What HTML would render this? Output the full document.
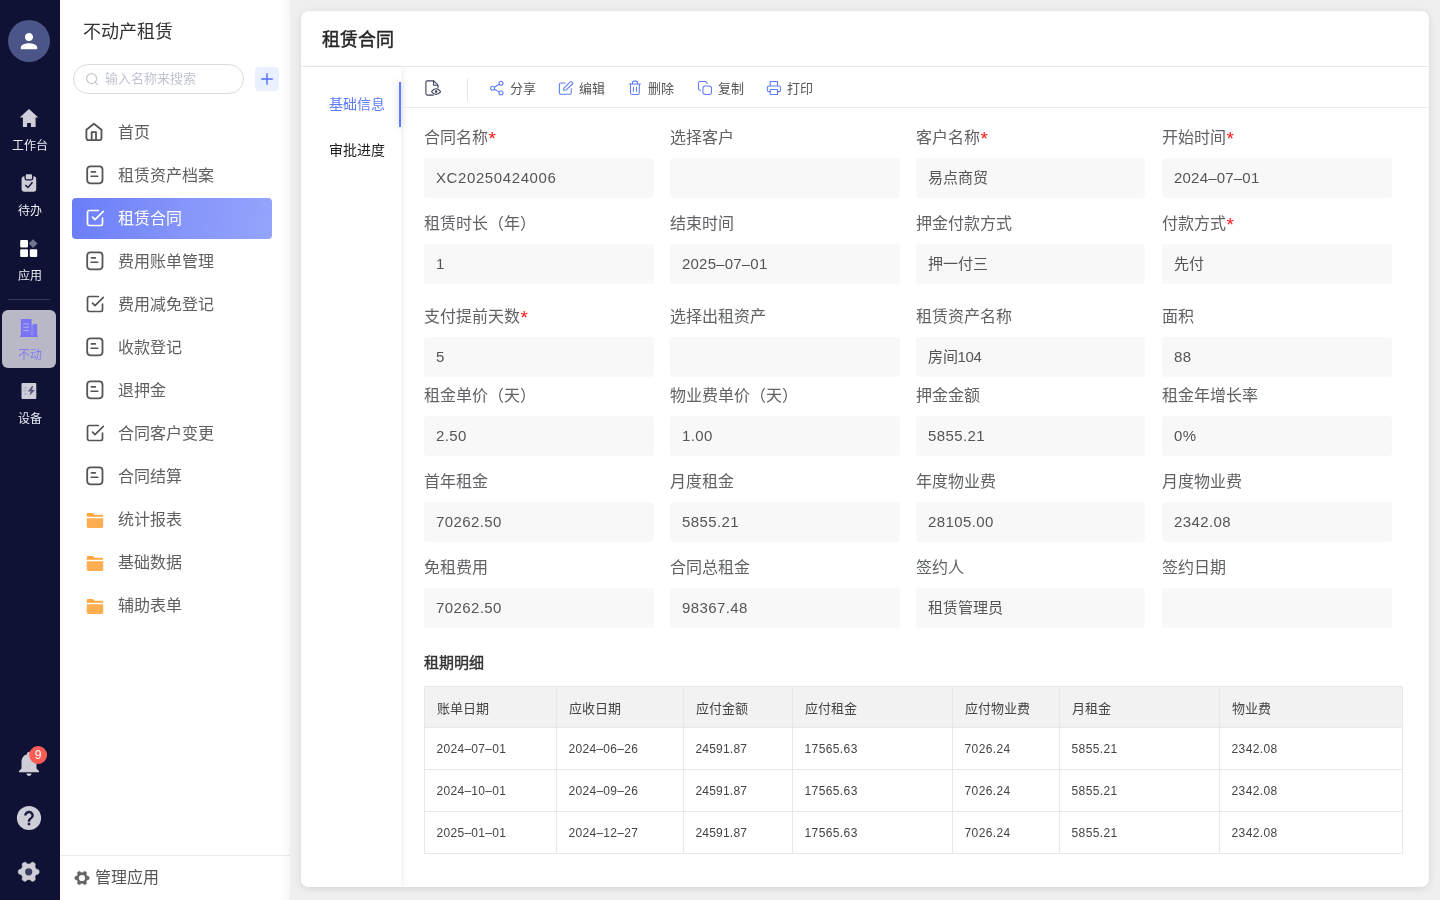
<!DOCTYPE html>
<html lang="zh-CN">
<head>
<meta charset="utf-8">
<title>租赁合同</title>
<style>
*{box-sizing:border-box;margin:0;padding:0}
html,body{width:1440px;height:900px;overflow:hidden}
body{font-family:"Liberation Sans",sans-serif;background:#efefef;position:relative;color:#333;-webkit-font-smoothing:antialiased}
#wrap{position:absolute;left:0;top:0;width:1440px;height:900px;will-change:transform}
/* rail */
#rail{position:absolute;left:0;top:0;width:60px;height:900px;background:#0f1235}
#avatar{position:absolute;left:8px;top:20px;width:42px;height:42px;border-radius:50%;background:#4b5588}
.rl{position:absolute;left:0;width:60px;text-align:center;font-size:12px;line-height:14px;color:#ececf2}
.ri{position:absolute}
#ractive{position:absolute;left:2px;top:310px;width:54px;height:58px;border-radius:6px;background:#b8b8c6}
#rdiv{position:absolute;left:8px;top:299px;width:42px;height:1px;background:#34385a}
/* sidebar */
#side{position:absolute;left:60px;top:0;width:230px;height:900px;background:#fff}
#side:after{content:"";position:absolute;right:0;top:0;width:9px;height:100%;background:linear-gradient(to right,rgba(0,0,0,0),rgba(0,0,0,0.03))}
#stitle{position:absolute;left:23px;top:20px;font-size:18px;line-height:24px;color:#333}
#search{position:absolute;left:13px;top:64px;width:171px;height:30px;border:1px solid #d9dbe1;border-radius:15px;background:#fff}
#search span{position:absolute;left:31px;top:0;line-height:28px;font-size:13px;color:#c0c5d0}
#plus{position:absolute;left:195px;top:67px;width:24px;height:24px;border-radius:4px;background:#e9f0ff}
.mi{position:absolute;left:12px;width:200px;height:41px;border-radius:4px}
.mi span{position:absolute;left:46px;top:0;line-height:41px;font-size:16px;color:#606060}
.mi svg{position:absolute;left:12px;top:10px}
.mi.act{background:linear-gradient(100deg,#6a7df8 0%,#8595fa 55%,#95a4fb 100%)}
.mi.act span{color:#fff}
#sfoot{position:absolute;left:0;top:855px;width:230px;height:45px;border-top:1px solid #ebebeb}
#sfoot span{position:absolute;left:35px;top:0;line-height:43px;font-size:16px;color:#555}
/* card */
#card{position:absolute;left:301px;top:11px;width:1128px;height:876px;background:#fff;border-radius:8px;box-shadow:0 2px 8px rgba(0,0,0,0.11);overflow:hidden}
#ctitle{position:absolute;left:20.5px;top:16px;font-size:18px;line-height:26px;font-weight:normal;-webkit-text-stroke:.45px #262626;color:#262626}
#chead{position:absolute;left:0;top:0;width:100%;height:56px;border-bottom:1px solid #e8e8e8}
#tabs{position:absolute;left:0;top:56px;width:100px;height:820px;background:#fff;box-shadow:2px 0 6px rgba(0,0,0,0.06)}
.tab{position:absolute;left:0;width:100px;text-align:center;padding-right:0;font-size:14px;line-height:46px;height:46px;color:#222}
.tab.on{color:#5c7cfa}
#tabbar{position:absolute;left:98px;top:15px;width:2px;height:45px;background:#5c7cfa;box-shadow:0 0 7px rgba(92,124,250,.45)}
#tool{position:absolute;left:100px;top:56px;width:1028px;height:41px;border-bottom:1px solid #ebebeb}
.tb{position:absolute;top:1px;line-height:41px;font-size:13px;color:#555}
.tbi{position:absolute}
/* form */
.lb{position:absolute;font-size:16px;line-height:22px;color:#606266;white-space:nowrap}
.lb i{font-style:normal;color:#ff1515;font-size:19px;line-height:0;vertical-align:-1.7px;margin-left:.5px}
.ip{position:absolute;width:230px;height:40px;border-radius:4px;background:#f8f8f8;padding-left:12px;line-height:40px;font-size:15px;color:#555;white-space:nowrap;letter-spacing:.4px}
#ttitle{position:absolute;left:424px;top:652px;font-size:15px;font-weight:normal;-webkit-text-stroke:.4px #333;line-height:22px;color:#333}
table{position:absolute;left:424px;top:686px;border-collapse:separate;border-spacing:0;table-layout:fixed;width:979px;border-top:1px solid #e8e8e8;border-left:1px solid #e8e8e8}
td,th{border:0;border-right:1px solid #e8e8e8;border-bottom:1px solid #e8e8e8;height:42px;padding:0 0 0 11.5px;text-align:left;font-size:12px;font-weight:normal;color:#444;letter-spacing:.4px;white-space:nowrap}
th{background:#f2f2f2;font-size:13px;color:#444;letter-spacing:0;height:41px}
</style>
</head>
<body>
<div id="wrap">
<div id="rail">
  <div id="avatar"></div>
  <div id="ractive"></div>
<svg class="ri" style="left:0;top:0" width="60" height="900" viewBox="0 0 60 900">
<!-- avatar person -->
<g transform="translate(16.7 28.8) scale(1.025)"><path d="M12 12c2.21 0 4-1.79 4-4s-1.79-4-4-4-4 1.79-4 4 1.79 4 4 4zm0 2c-2.67 0-8 1.34-8 4v2h16v-2c0-2.66-5.330-4-8-4z" fill="#fff"/></g>
<!-- home -->
<path d="M29 108.9 L38.3 117.6 H35.6 V127 H30.9 V123.1 H27.1 V127 H22.9 V117.6 H19.7 Z" fill="#cdced8"/>
<!-- clipboard -->
<rect x="21.6" y="176.3" width="14.6" height="15.4" rx="2.6" fill="#cdced8"/>
<rect x="25.1" y="173.6" width="7.6" height="6.3" rx="1.6" fill="#cdced8" stroke="#0f1235" stroke-width="1.3"/>
<path d="M25.3 185.1 L28 187.5 L32.5 182.2" fill="none" stroke="#15183c" stroke-width="1.5"/>
<!-- apps -->
<rect x="20.2" y="240" width="7.8" height="7.5" rx="1" fill="#fff"/>
<rect x="20.2" y="249.2" width="7.8" height="7.7" rx="1" fill="#fff"/>
<rect x="29.8" y="249.2" width="7.4" height="7.7" rx="1" fill="#fff"/>
<path d="M33.1 239.2 L37.5 243.6 L33.1 248 L28.7 243.6 Z" fill="#70748f"/>
<!-- building (active) -->
<g fill="#7a73f6">
<rect x="20.9" y="319" width="10.7" height="17"/>
<rect x="33.1" y="324" width="4.1" height="12"/>
<rect x="20" y="335.5" width="18" height="1.5"/>
<rect x="31.6" y="325" width="1.5" height="11" opacity=".75"/>
</g>
<g fill="#a9a6ee"><rect x="23.3" y="323.3" width="5.7" height="1.2"/><rect x="23.3" y="326.6" width="5.7" height="1.2"/><rect x="23.3" y="330" width="5.7" height="1.2"/></g>
<!-- device -->
<rect x="21.5" y="383" width="14.8" height="16.1" rx="1" fill="#cdced8"/>
<path d="M32 386 L27.7 391.6 H30.6 L29.4 395.8 L35 389.9 H32.1 L33.2 386 Z" fill="#5b5f7f"/>
<g fill="#a6a9bd"><rect x="23.9" y="387.4" width="3.2" height="1.1"/><rect x="23.2" y="390.3" width="3" height="1.1"/><rect x="23.9" y="393.3" width="3.2" height="1.1"/></g>
<!-- bell -->
<g transform="translate(14 748.5) scale(1.25)"><path d="M12 22c1.1 0 2-.9 2-2h-4c0 1.1.89 2 2 2zm6-6v-5c0-3.07-1.64-5.64-4.5-6.320V4c0-.83-.67-1.5-1.5-1.5s-1.5.67-1.500 1.500v.68C7.630 5.360 6 7.920 6 11v5l-2 2v1h16v-1l-2-2z" fill="#cdced8"/></g>
<circle cx="38.1" cy="755" r="9" fill="#fd5c55"/>
<text x="38.2" y="759.2" font-family="Liberation Sans, sans-serif" font-size="12" fill="#fff" text-anchor="middle">9</text>
<!-- help -->
<circle cx="29" cy="818" r="12.1" fill="#cdced8"/>
<g transform="translate(29 818) scale(1.21) translate(-12 -12)"><path d="M11 18h2v-2h-2v2zm1-12c-2.21 0-4 1.79-4 4h2c0-1.1.9-2 2-2s2 .9 2 2c0 2-3 1.75-3 5h2c0-2.250 3-2.5 3-5 0-2.21-1.79-4-4-4z" fill="#1a1d40"/></g>
<!-- gear -->
<g transform="translate(28.7 871.8)"><path d="M10.40 0.00 L10.39 0.45 L10.36 0.91 L10.29 1.35 L10.01 1.77 L9.50 2.11 L8.84 2.37 L8.17 2.58 L7.64 2.78 L7.32 3.03 L7.16 3.34 L7.01 3.65 L6.84 3.95 L6.66 4.24 L6.47 4.53 L6.29 4.82 L6.23 5.23 L6.31 5.79 L6.47 6.47 L6.58 7.18 L6.54 7.79 L6.32 8.23 L5.97 8.52 L5.59 8.77 L5.20 9.01 L4.80 9.22 L4.40 9.43 L3.97 9.59 L3.48 9.56 L2.93 9.28 L2.37 8.84 L1.85 8.36 L1.41 8.01 L1.03 7.86 L0.69 7.87 L0.34 7.89 L0.00 7.90 L-0.34 7.89 L-0.69 7.87 L-1.03 7.86 L-1.41 8.01 L-1.85 8.36 L-2.37 8.84 L-2.93 9.28 L-3.48 9.56 L-3.97 9.59 L-4.40 9.43 L-4.80 9.22 L-5.20 9.01 L-5.59 8.77 L-5.97 8.52 L-6.32 8.23 L-6.54 7.79 L-6.58 7.18 L-6.47 6.47 L-6.31 5.79 L-6.23 5.23 L-6.29 4.82 L-6.47 4.53 L-6.66 4.24 L-6.84 3.95 L-7.01 3.65 L-7.16 3.34 L-7.32 3.03 L-7.64 2.78 L-8.17 2.58 L-8.84 2.37 L-9.50 2.11 L-10.01 1.77 L-10.29 1.35 L-10.36 0.91 L-10.39 0.45 L-10.40 0.00 L-10.39 -0.45 L-10.36 -0.91 L-10.29 -1.35 L-10.01 -1.77 L-9.50 -2.11 L-8.84 -2.37 L-8.17 -2.58 L-7.64 -2.78 L-7.32 -3.03 L-7.16 -3.34 L-7.01 -3.65 L-6.84 -3.95 L-6.66 -4.24 L-6.47 -4.53 L-6.29 -4.82 L-6.23 -5.23 L-6.31 -5.79 L-6.47 -6.47 L-6.58 -7.18 L-6.54 -7.79 L-6.32 -8.23 L-5.97 -8.52 L-5.59 -8.77 L-5.20 -9.01 L-4.80 -9.22 L-4.40 -9.43 L-3.97 -9.59 L-3.48 -9.56 L-2.93 -9.28 L-2.37 -8.84 L-1.85 -8.36 L-1.41 -8.01 L-1.03 -7.86 L-0.69 -7.87 L-0.34 -7.89 L-0.00 -7.90 L0.34 -7.89 L0.69 -7.87 L1.03 -7.86 L1.41 -8.01 L1.85 -8.36 L2.37 -8.84 L2.93 -9.28 L3.48 -9.56 L3.97 -9.59 L4.40 -9.43 L4.80 -9.22 L5.20 -9.01 L5.59 -8.77 L5.97 -8.52 L6.32 -8.23 L6.54 -7.79 L6.58 -7.18 L6.47 -6.47 L6.31 -5.79 L6.23 -5.23 L6.29 -4.82 L6.47 -4.53 L6.66 -4.24 L6.84 -3.95 L7.01 -3.65 L7.16 -3.34 L7.32 -3.03 L7.64 -2.78 L8.17 -2.58 L8.84 -2.37 L9.50 -2.11 L10.01 -1.77 L10.29 -1.35 L10.36 -0.91 L10.39 -0.45Z" fill="#cdced8" stroke="#cdced8" stroke-width="0.6" stroke-linejoin="round"/><circle r="3.6" fill="#3b3e5e"/></g>
</svg>
  <div class="rl" style="top:139px">工作台</div>
  <div class="rl" style="top:204px">待办</div>
  <div class="rl" style="top:269px">应用</div>
  <div id="rdiv"></div>
  
  <div class="rl" style="top:348px;color:#827cf3">不动</div>
  <div class="rl" style="top:412px">设备</div>
</div>
<div id="side">
  <div id="stitle">不动产租赁</div>
  <div id="search"><svg style="position:absolute;left:11px;top:7px" width="15" height="15" viewBox="0 0 15 15" fill="none" stroke="#c3c7d1" stroke-width="1.2" stroke-linecap="round"><circle cx="6.6" cy="6.6" r="5"/><path d="M10.4 10.4 L12.6 12.6"/></svg><span>输入名称来搜索</span></div>
  <div id="plus"><svg width="24" height="24" viewBox="0 0 24 24" fill="none" stroke="#4f6df5" stroke-width="1.4"><path d="M12 6.2 V17.8 M6.2 12 H17.8"/></svg></div>
  <div class="mi" style="top:112px"><svg width="22" height="22" viewBox="0 0 22 22" style="left:12px;top:10px" fill="none" stroke="#555" stroke-width="1.8" stroke-linejoin="round"><path d="M2.4 7.7 L9.9 1.8 L17.5 7.7 V16.1 a2 2 0 0 1 -2 2 H4.4 a2 2 0 0 1 -2 -2 Z"/><path d="M7.7 18 V10.1 H12 V18"/></svg><span>首页</span></div>
  <div class="mi" style="top:155px"><svg width="22" height="22" viewBox="0 0 22 22" style="left:12px;top:9px"><rect x="3.2" y="2.3" width="15.3" height="17" rx="3.2" fill="none" stroke="#555" stroke-width="1.8"/><path d="M7.4 7.9 H11.4 M7 12.2 H13.8" stroke="#555" stroke-width="1.6" stroke-linecap="round" fill="none"/></svg><span>租赁资产档案</span></div>
  <div class="mi act" style="top:198px"><svg width="20" height="20" viewBox="0 0 24 24" style="left:13.15px;top:9.85px" fill="none" stroke="#fff" stroke-width="2.05" stroke-linecap="round" stroke-linejoin="round"><path d="M9 11l3 3L22 4"/><path d="M21 12v7a2 2 0 0 1-2 2H5a2 2 0 0 1-2-2V5a2 2 0 0 1 2-2h11"/></svg><span>租赁合同</span></div>
  <div class="mi" style="top:241px"><svg width="22" height="22" viewBox="0 0 22 22" style="left:12px;top:9px"><rect x="3.2" y="2.3" width="15.3" height="17" rx="3.2" fill="none" stroke="#555" stroke-width="1.8"/><path d="M7.4 7.9 H11.4 M7 12.2 H13.8" stroke="#555" stroke-width="1.6" stroke-linecap="round" fill="none"/></svg><span>费用账单管理</span></div>
  <div class="mi" style="top:284px"><svg width="20" height="20" viewBox="0 0 24 24" style="left:13.15px;top:9.85px" fill="none" stroke="#555" stroke-width="2.05" stroke-linecap="round" stroke-linejoin="round"><path d="M9 11l3 3L22 4"/><path d="M21 12v7a2 2 0 0 1-2 2H5a2 2 0 0 1-2-2V5a2 2 0 0 1 2-2h11"/></svg><span>费用减免登记</span></div>
  <div class="mi" style="top:327px"><svg width="22" height="22" viewBox="0 0 22 22" style="left:12px;top:9px"><rect x="3.2" y="2.3" width="15.3" height="17" rx="3.2" fill="none" stroke="#555" stroke-width="1.8"/><path d="M7.4 7.9 H11.4 M7 12.2 H13.8" stroke="#555" stroke-width="1.6" stroke-linecap="round" fill="none"/></svg><span>收款登记</span></div>
  <div class="mi" style="top:370px"><svg width="22" height="22" viewBox="0 0 22 22" style="left:12px;top:9px"><rect x="3.2" y="2.3" width="15.3" height="17" rx="3.2" fill="none" stroke="#555" stroke-width="1.8"/><path d="M7.4 7.9 H11.4 M7 12.2 H13.8" stroke="#555" stroke-width="1.6" stroke-linecap="round" fill="none"/></svg><span>退押金</span></div>
  <div class="mi" style="top:413px"><svg width="20" height="20" viewBox="0 0 24 24" style="left:13.15px;top:9.85px" fill="none" stroke="#555" stroke-width="2.05" stroke-linecap="round" stroke-linejoin="round"><path d="M9 11l3 3L22 4"/><path d="M21 12v7a2 2 0 0 1-2 2H5a2 2 0 0 1-2-2V5a2 2 0 0 1 2-2h11"/></svg><span>合同客户变更</span></div>
  <div class="mi" style="top:456px"><svg width="22" height="22" viewBox="0 0 22 22" style="left:12px;top:9px"><rect x="3.2" y="2.3" width="15.3" height="17" rx="3.2" fill="none" stroke="#555" stroke-width="1.8"/><path d="M7.4 7.9 H11.4 M7 12.2 H13.8" stroke="#555" stroke-width="1.6" stroke-linecap="round" fill="none"/></svg><span>合同结算</span></div>
  <div class="mi" style="top:499px"><svg width="22" height="22" viewBox="0 0 22 22" style="left:12px;top:10px"><path d="M2.8 5 a1 1 0 0 1 1 -1 H8.6 a1 1 0 0 1 .8 .4 l.9 1.1 a1 1 0 0 0 .8 .3 H17.8 a1.4 1.4 0 0 1 1.4 1.4 V7.8 H2.8 Z" fill="#ffa640"/><path d="M2.8 9.2 H19.2 V17.6 a1.4 1.4 0 0 1 -1.4 1.4 H4.2 a1.4 1.4 0 0 1 -1.4 -1.4 Z" fill="#ffad52"/></svg><span>统计报表</span></div>
  <div class="mi" style="top:542px"><svg width="22" height="22" viewBox="0 0 22 22" style="left:12px;top:10px"><path d="M2.8 5 a1 1 0 0 1 1 -1 H8.6 a1 1 0 0 1 .8 .4 l.9 1.1 a1 1 0 0 0 .8 .3 H17.8 a1.4 1.4 0 0 1 1.4 1.4 V7.8 H2.8 Z" fill="#ffa640"/><path d="M2.8 9.2 H19.2 V17.6 a1.4 1.4 0 0 1 -1.4 1.4 H4.2 a1.4 1.4 0 0 1 -1.4 -1.4 Z" fill="#ffad52"/></svg><span>基础数据</span></div>
  <div class="mi" style="top:585px"><svg width="22" height="22" viewBox="0 0 22 22" style="left:12px;top:10px"><path d="M2.8 5 a1 1 0 0 1 1 -1 H8.6 a1 1 0 0 1 .8 .4 l.9 1.1 a1 1 0 0 0 .8 .3 H17.8 a1.4 1.4 0 0 1 1.4 1.4 V7.8 H2.8 Z" fill="#ffa640"/><path d="M2.8 9.2 H19.2 V17.6 a1.4 1.4 0 0 1 -1.4 1.4 H4.2 a1.4 1.4 0 0 1 -1.4 -1.4 Z" fill="#ffad52"/></svg><span>辅助表单</span></div>
  <div id="sfoot"><svg style="position:absolute;left:12.6px;top:13.1px" width="18" height="18" viewBox="-9 -9 18 18"><path d="M7.20 0.00 L7.19 0.31 L7.17 0.63 L7.12 0.94 L6.93 1.22 L6.56 1.45 L6.09 1.63 L5.61 1.77 L5.23 1.90 L5.01 2.07 L4.89 2.28 L4.79 2.49 L4.68 2.70 L4.55 2.90 L4.42 3.10 L4.30 3.30 L4.26 3.58 L4.33 3.97 L4.45 4.45 L4.54 4.96 L4.52 5.39 L4.37 5.70 L4.13 5.90 L3.87 6.07 L3.60 6.24 L3.32 6.39 L3.04 6.53 L2.75 6.64 L2.41 6.61 L2.02 6.41 L1.63 6.09 L1.27 5.74 L0.97 5.48 L0.71 5.37 L0.47 5.38 L0.24 5.39 L0.00 5.40 L-0.24 5.39 L-0.47 5.38 L-0.71 5.37 L-0.97 5.48 L-1.27 5.74 L-1.63 6.09 L-2.02 6.41 L-2.41 6.61 L-2.75 6.64 L-3.04 6.53 L-3.32 6.39 L-3.60 6.24 L-3.87 6.07 L-4.13 5.90 L-4.37 5.70 L-4.52 5.39 L-4.54 4.96 L-4.45 4.45 L-4.33 3.97 L-4.26 3.58 L-4.30 3.30 L-4.42 3.10 L-4.55 2.90 L-4.68 2.70 L-4.79 2.49 L-4.89 2.28 L-5.01 2.07 L-5.23 1.90 L-5.61 1.77 L-6.09 1.63 L-6.56 1.45 L-6.93 1.22 L-7.12 0.94 L-7.17 0.63 L-7.19 0.31 L-7.20 0.00 L-7.19 -0.31 L-7.17 -0.63 L-7.12 -0.94 L-6.93 -1.22 L-6.56 -1.45 L-6.09 -1.63 L-5.61 -1.77 L-5.23 -1.90 L-5.01 -2.07 L-4.89 -2.28 L-4.79 -2.49 L-4.68 -2.70 L-4.55 -2.90 L-4.42 -3.10 L-4.30 -3.30 L-4.26 -3.58 L-4.33 -3.97 L-4.45 -4.45 L-4.54 -4.96 L-4.52 -5.39 L-4.37 -5.70 L-4.13 -5.90 L-3.87 -6.07 L-3.60 -6.24 L-3.32 -6.39 L-3.04 -6.53 L-2.75 -6.64 L-2.41 -6.61 L-2.02 -6.41 L-1.63 -6.09 L-1.27 -5.74 L-0.97 -5.48 L-0.71 -5.37 L-0.47 -5.38 L-0.24 -5.39 L-0.00 -5.40 L0.24 -5.39 L0.47 -5.38 L0.71 -5.37 L0.97 -5.48 L1.27 -5.74 L1.63 -6.09 L2.02 -6.41 L2.41 -6.61 L2.75 -6.64 L3.04 -6.53 L3.32 -6.39 L3.60 -6.24 L3.87 -6.07 L4.13 -5.90 L4.37 -5.70 L4.52 -5.39 L4.54 -4.96 L4.45 -4.45 L4.33 -3.97 L4.26 -3.58 L4.30 -3.30 L4.42 -3.10 L4.55 -2.90 L4.68 -2.70 L4.79 -2.49 L4.89 -2.28 L5.01 -2.07 L5.23 -1.90 L5.61 -1.77 L6.09 -1.63 L6.56 -1.45 L6.93 -1.22 L7.12 -0.94 L7.17 -0.63 L7.19 -0.31Z" fill="#666" stroke="#666" stroke-width="0.5" stroke-linejoin="round"/><circle r="3.1" fill="#fff"/></svg><span>管理应用</span></div>
</div>
<div id="card">
  <div id="chead"></div>
  <div id="ctitle">租赁合同</div>
  <div id="tabs">
    <div class="tab on" style="top:14px"><span style="position:relative;left:6px">基础信息</span></div>
    <div class="tab" style="top:60px"><span style="position:relative;left:6px">审批进度</span></div>
    <div id="tabbar"></div>
  </div>
  <svg style="position:absolute;left:0;top:0" width="1128" height="120" viewBox="301 11 1128 120" fill="none" stroke-linecap="round" stroke-linejoin="round">
<!-- file eye -->
<g stroke="#3b4358" stroke-width="1.1">
<path d="M433.4 95.1 H427.4 a1.5 1.5 0 0 1 -1.5 -1.5 V82.4 a1.5 1.5 0 0 1 1.5 -1.5 H433.8 L438 85.1 V88"/>
<path d="M433.6 81.2 V85.2 H437.8"/>
<path d="M431.6 91.6 C432.9 89.6 434.4 88.8 436.1 88.8 C437.8 88.8 439.3 89.6 440.6 91.6 C439.3 93.6 437.8 94.4 436.1 94.4 C434.4 94.4 432.9 93.6 431.6 91.6 Z" fill="#fff"/>
<circle cx="436.1" cy="91.6" r="0.8" fill="#3b4358"/>
</g>
<path d="M467.5 79 V101" stroke="#e6e6e6" stroke-width="1"/>
<g stroke="#5b7bfa" stroke-width="1.05">
<!-- share -->
<circle cx="501" cy="83.3" r="2"/><circle cx="492.6" cy="88.2" r="2"/><circle cx="501" cy="92.9" r="2"/>
<path d="M494.4 87.2 L499.2 84.3 M494.4 89.2 L499.2 91.9"/>
<!-- edit -->
<path d="M565 83 H561 a1.6 1.6 0 0 0 -1.6 1.6 V92.7 a1.6 1.6 0 0 0 1.6 1.6 H569.6 a1.6 1.6 0 0 0 1.6 -1.6 V88.4"/>
<path d="M563.6 90.3 L563.9 88.1 L570.3 81.9 a1.1 1.1 0 0 1 1.6 0 l0.5 0.5 a1.1 1.1 0 0 1 0 1.6 L566 90.1 Z"/>
<!-- trash -->
<path d="M629.2 84 H640.4"/>
<path d="M632.5 83.8 V82.6 a1.5 1.5 0 0 1 1.5 -1.5 H636 a1.5 1.5 0 0 1 1.5 1.5 V83.8"/>
<path d="M630.5 84.2 V92.8 a1.7 1.7 0 0 0 1.7 1.7 H637.6 a1.7 1.7 0 0 0 1.7 -1.7 V84.2"/>
<path d="M633.4 87.2 V91.2 M636.5 87.2 V91.2"/>
<!-- copy -->
<rect x="702.9" y="85.9" width="8.6" height="8.6" rx="2.4"/>
<path d="M700.6 90.2 H700.2 a1.8 1.8 0 0 1 -1.7 -1.8 V83.3 a1.8 1.8 0 0 1 1.8 -1.8 H705.2 a1.8 1.8 0 0 1 1.8 1.8 V83.6"/>
<!-- print -->
<path d="M770.2 85.8 V81.5 H777.6 V85.8"/>
<path d="M770.2 91.6 H769 a1.7 1.7 0 0 1 -1.7 -1.7 V87.7 a1.7 1.7 0 0 1 1.7 -1.7 H778.8 a1.7 1.7 0 0 1 1.7 1.7 V89.9 a1.7 1.7 0 0 1 -1.7 1.7 H777.6"/>
<rect x="770.2" y="89.4" width="7.4" height="5.1" rx="0.6"/>
</g>
</svg>
  <div id="tool">
    <div class="tb" style="left:109px">分享</div>
    <div class="tb" style="left:178px">编辑</div>
    <div class="tb" style="left:247px">删除</div>
    <div class="tb" style="left:317px">复制</div>
    <div class="tb" style="left:386px">打印</div>
  </div>
</div>
<!-- FORM -->
<div id="form">
<div class="lb" style="left:424px;top:127px">合同名称<i>*</i></div><div class="ip" style="left:424px;top:158px;letter-spacing:.6px">XC20250424006</div>
<div class="lb" style="left:670px;top:127px">选择客户</div><div class="ip" style="left:670px;top:158px"></div>
<div class="lb" style="left:916px;top:127px">客户名称<i>*</i></div><div class="ip" style="left:916px;top:158px;width:229px;letter-spacing:0">易点商贸</div>
<div class="lb" style="left:1162px;top:127px">开始时间<i>*</i></div><div class="ip" style="left:1162px;top:158px;letter-spacing:.2px">2024–07–01</div>
<div class="lb" style="left:424px;top:213px">租赁时长（年）</div><div class="ip" style="left:424px;top:244px">1</div>
<div class="lb" style="left:670px;top:213px">结束时间</div><div class="ip" style="left:670px;top:244px;letter-spacing:.2px">2025–07–01</div>
<div class="lb" style="left:916px;top:213px">押金付款方式</div><div class="ip" style="left:916px;top:244px;width:229px;letter-spacing:0">押一付三</div>
<div class="lb" style="left:1162px;top:213px">付款方式<i>*</i></div><div class="ip" style="left:1162px;top:244px;letter-spacing:0">先付</div>
<div class="lb" style="left:424px;top:306px">支付提前天数<i>*</i></div><div class="ip" style="left:424px;top:337px">5</div>
<div class="lb" style="left:670px;top:306px">选择出租资产</div><div class="ip" style="left:670px;top:337px"></div>
<div class="lb" style="left:916px;top:306px">租赁资产名称</div><div class="ip" style="left:916px;top:337px;width:229px;letter-spacing:-.3px">房间104</div>
<div class="lb" style="left:1162px;top:306px">面积</div><div class="ip" style="left:1162px;top:337px">88</div>
<div class="lb" style="left:424px;top:385px">租金单价（天）</div><div class="ip" style="left:424px;top:416px">2.50</div>
<div class="lb" style="left:670px;top:385px">物业费单价（天）</div><div class="ip" style="left:670px;top:416px">1.00</div>
<div class="lb" style="left:916px;top:385px">押金金额</div><div class="ip" style="left:916px;top:416px;width:229px">5855.21</div>
<div class="lb" style="left:1162px;top:385px">租金年增长率</div><div class="ip" style="left:1162px;top:416px">0%</div>
<div class="lb" style="left:424px;top:471px">首年租金</div><div class="ip" style="left:424px;top:502px">70262.50</div>
<div class="lb" style="left:670px;top:471px">月度租金</div><div class="ip" style="left:670px;top:502px">5855.21</div>
<div class="lb" style="left:916px;top:471px">年度物业费</div><div class="ip" style="left:916px;top:502px;width:229px">28105.00</div>
<div class="lb" style="left:1162px;top:471px">月度物业费</div><div class="ip" style="left:1162px;top:502px">2342.08</div>
<div class="lb" style="left:424px;top:557px">免租费用</div><div class="ip" style="left:424px;top:588px">70262.50</div>
<div class="lb" style="left:670px;top:557px">合同总租金</div><div class="ip" style="left:670px;top:588px">98367.48</div>
<div class="lb" style="left:916px;top:557px">签约人</div><div class="ip" style="left:916px;top:588px;width:229px;letter-spacing:0">租赁管理员</div>
<div class="lb" style="left:1162px;top:557px">签约日期</div><div class="ip" style="left:1162px;top:588px"></div>
</div>
<div id="ttitle">租期明细</div>
<table>
<colgroup><col style="width:132px"><col style="width:127px"><col style="width:109px"><col style="width:160px"><col style="width:107px"><col style="width:160px"><col style="width:183px"></colgroup>
<tr><th>账单日期</th><th>应收日期</th><th>应付金额</th><th>应付租金</th><th>应付物业费</th><th>月租金</th><th>物业费</th></tr>
<tr><td style="letter-spacing:.3px">2024–07–01</td><td style="letter-spacing:.3px">2024–06–26</td><td style="letter-spacing:.2px">24591.87</td><td>17565.63</td><td>7026.24</td><td>5855.21</td><td>2342.08</td></tr>
<tr><td style="letter-spacing:.3px">2024–10–01</td><td style="letter-spacing:.3px">2024–09–26</td><td style="letter-spacing:.2px">24591.87</td><td>17565.63</td><td>7026.24</td><td>5855.21</td><td>2342.08</td></tr>
<tr><td style="letter-spacing:.3px">2025–01–01</td><td style="letter-spacing:.3px">2024–12–27</td><td style="letter-spacing:.2px">24591.87</td><td>17565.63</td><td>7026.24</td><td>5855.21</td><td>2342.08</td></tr>
</table>
</div>
</body>
</html>
